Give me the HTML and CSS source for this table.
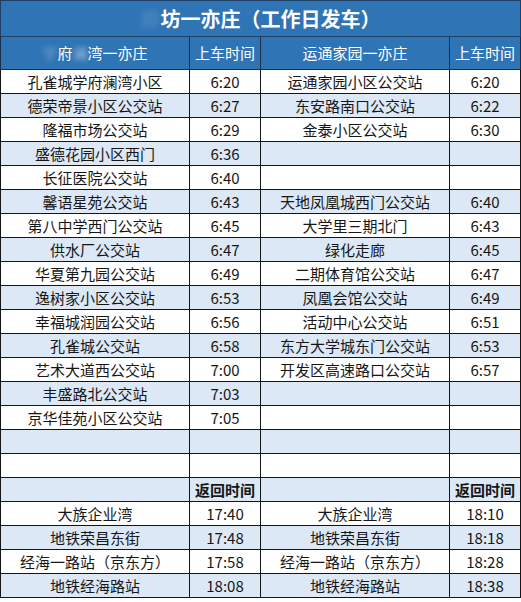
FILE: index.html
```html
<!DOCTYPE html>
<html lang="zh-CN">
<head>
<meta charset="utf-8">
<title>坊一亦庄（工作日发车）</title>
<link rel="stylesheet" href="styles.css">
</head>
<body>
<table class="sched">
  <colgroup>
    <col class="c-name"><col class="c-time"><col class="c-name"><col class="c-time">
  </colgroup>
  <tr class="title"><td colspan="4"><span class="blur faint">廊</span>坊一亦庄（工作日发车）</td></tr>
  <tr class="head">
    <td><span class="blur dim">学</span>府<span class="blur">澜</span>湾一亦庄</td>
    <td>上车时间</td>
    <td>运通家园一亦庄</td>
    <td>上车时间</td>
  </tr>
  <tr><td>孔雀城学府澜湾小区</td><td>6:20</td><td>运通家园小区公交站</td><td>6:20</td></tr>
  <tr class="alt"><td>德荣帝景小区公交站</td><td>6:27</td><td>东安路南口公交站</td><td>6:22</td></tr>
  <tr><td>隆福市场公交站</td><td>6:29</td><td>金泰小区公交站</td><td>6:30</td></tr>
  <tr class="alt"><td>盛德花园小区西门</td><td>6:36</td><td></td><td></td></tr>
  <tr><td>长征医院公交站</td><td>6:40</td><td></td><td></td></tr>
  <tr class="alt"><td>馨语星苑公交站</td><td>6:43</td><td>天地凤凰城西门公交站</td><td>6:40</td></tr>
  <tr><td>第八中学西门公交站</td><td>6:45</td><td>大学里三期北门</td><td>6:43</td></tr>
  <tr class="alt"><td>供水厂公交站</td><td>6:47</td><td>绿化走廊</td><td>6:45</td></tr>
  <tr><td>华夏第九园公交站</td><td>6:49</td><td>二期体育馆公交站</td><td>6:47</td></tr>
  <tr class="alt"><td>逸树家小区公交站</td><td>6:53</td><td>凤凰会馆公交站</td><td>6:49</td></tr>
  <tr><td>幸福城润园公交站</td><td>6:56</td><td>活动中心公交站</td><td>6:51</td></tr>
  <tr class="alt"><td>孔雀城公交站</td><td>6:58</td><td>东方大学城东门公交站</td><td>6:53</td></tr>
  <tr><td>艺术大道西公交站</td><td>7:00</td><td>开发区高速路口公交站</td><td>6:57</td></tr>
  <tr class="alt"><td>丰盛路北公交站</td><td>7:03</td><td></td><td></td></tr>
  <tr><td>京华佳苑小区公交站</td><td>7:05</td><td></td><td></td></tr>
  <tr class="alt"><td></td><td></td><td></td><td></td></tr>
  <tr><td></td><td></td><td></td><td></td></tr>
  <tr class="alt"><td></td><td class="bold">返回时间</td><td></td><td class="bold">返回时间</td></tr>
  <tr><td>大族企业湾</td><td>17:40</td><td>大族企业湾</td><td>18:10</td></tr>
  <tr class="alt"><td>地铁荣昌东街</td><td>17:48</td><td>地铁荣昌东街</td><td>18:18</td></tr>
  <tr><td>经海一路站（京东方）</td><td>17:58</td><td>经海一路站（京东方）</td><td>18:28</td></tr>
  <tr class="alt"><td>地铁经海路站</td><td>18:08</td><td>地铁经海路站</td><td>18:38</td></tr>
</table>
</body>
</html>
```

FILE: styles.css
```css
html, body {
  margin: 0;
  padding: 0;
  background: #ffffff;
}

.sched {
  border-collapse: collapse;
  table-layout: fixed;
  width: 521px;
  font-family: "Noto Sans CJK SC", "Noto Sans", sans-serif;
  font-size: 15px;
  color: #161616;
}

.c-name { width: 189px; }
.c-time { width: 71px; }

.sched td {
  border: 1px solid #151515;
  height: 23px;
  padding: 0;
  text-align: center;
  vertical-align: middle;
  line-height: 22px;
  white-space: nowrap;
  overflow: hidden;
}

.sched tr.alt td {
  background: #dce8f5;
}

.title td {
  background: #2f74b5;
  color: #ffffff;
  font-size: 20px;
  font-weight: bold;
  height: 35px;
  border-color: #1f3f66;
}

.head td {
  background: #2f74b5;
  color: #ffffff;
  font-size: 15px;
  height: 32px;
  border-color: #1a2f4a;
}

.blur {
  filter: blur(2.5px);
  color: rgba(255, 255, 255, 0.55);
}

.blur.dim {
  color: rgba(255, 255, 255, 0.35);
}

.blur.faint {
  color: rgba(255, 255, 255, 0.12);
}

.bold {
  font-weight: bold;
}
```
